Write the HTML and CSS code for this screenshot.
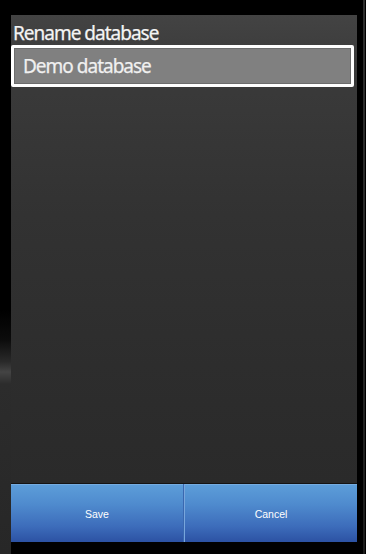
FILE: index.html
```html
<!DOCTYPE html>
<html>
<head>
<meta charset="utf-8">
<link rel="stylesheet" href="styles.css">
</head>
<body>
<div class="dialog">
  <div class="title">Rename database</div>
  <div class="field"><div class="field-inner">Demo database</div></div>
  <div class="spacer"></div>
  <div class="buttons">
    <div class="btn btn-save">Save</div>
    <div class="btn btn-cancel">Cancel</div>
  </div>
</div>
</body>
</html>
```
FILE: styles.css
```css
html, body {
  margin: 0;
  padding: 0;
  width: 366px;
  height: 554px;
  overflow: hidden;
}
body {
  background:
    linear-gradient(to bottom, #2e2e2e 0, #262626 60%, #1c1c1c 100%) no-repeat 363px 0 / 2px 100%,
    linear-gradient(to bottom, #000 0, #000 310px, #0c0c0c 340px, #2a2a2a 362px, #444 372px, #2c2c2c 384px, #272727 100%) no-repeat 0 0 / 11px 100%,
    #000;
  font-family: "Noto Sans", "Open Sans", sans-serif;
}
.dialog {
  position: relative;
  margin: 15px 0 0 11px;
  width: 346px;
  height: 527px;
  display: flex;
  flex-direction: column;
  background: linear-gradient(to bottom, #434343 0, #3a3a3a 60px, #323232 200px, #2d2d2d 350px, #2a2a2a 468px);
}
.title {
  height: 30px;
  box-sizing: border-box;
  padding: 6px 0 0 2px;
  font-size: 19px;
  letter-spacing: -1px;
  line-height: 24px;
  color: #f4f4f4;
  -webkit-text-stroke: 0.25px #f4f4f4;
  white-space: nowrap;
}
.field {
  width: 343px;
  height: 42px;
  box-sizing: border-box;
  border: 3px solid #ffffff;
  border-radius: 2px;
  background: #808080;
}
.field-inner {
  height: 100%;
  box-sizing: border-box;
  border: 1px solid #6c6c6c;
  padding-left: 8px;
  font-size: 19px;
  letter-spacing: -1px;
  line-height: 34px;
  color: #f0f0f0;
  -webkit-text-stroke: 0.25px #f0f0f0;
  white-space: nowrap;
}
.spacer {
  flex: 1;
}
.buttons {
  height: 59px;
  display: flex;
  border-top: 1px solid #141414;
  box-sizing: border-box;
}
.btn {
  flex: 1;
  display: flex;
  align-items: center;
  justify-content: center;
  padding-top: 2px;
  font-family: "Liberation Sans", Arial, sans-serif;
  font-size: 10.5px;
  color: #ffffff;
  background: linear-gradient(to bottom, #8dbbe9 0, #5c9dd9 1px, #4f8bce 20px, #3d6dbb 42px, #2c52a3 100%);
}
.btn-save {
  border-right: 1px solid #3a68b0;
}
.btn-cancel {
  border-left: 1px solid #78a6dc;
}
```
